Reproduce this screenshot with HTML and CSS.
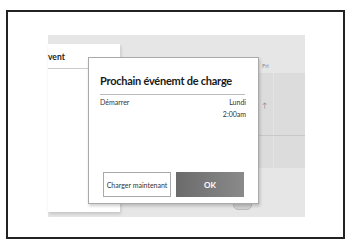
FILE: index.html
```html
<!DOCTYPE html>
<html lang="fr">
<head>
    <meta charset="UTF-8">
    <meta name="viewport" content="width=device-width, initial-scale=1.0">
    <title>Prochain événement de charge</title>
    <link rel="stylesheet" href="styles.css">
</head>
<body>
    <div class="frame">
        <div class="screen">
            <div class="schedule">
                <div class="day-label">Fri</div>
                <div class="grid">
                    <div class="grid-row">
                        <div class="cell"><span class="mark">↑</span></div>
                        <div class="cell"></div>
                    </div>
                    <div class="grid-row short">
                        <div class="cell"></div>
                        <div class="cell"></div>
                    </div>
                </div>
                <div class="toggle"></div>
            </div>

            <div class="side-panel">
                <div class="side-title">vent</div>
            </div>

            <div class="dialog">
                <h1 class="dialog-title">Prochain événemt de charge</h1>
                <div class="event-row">
                    <span class="event-label">Démarrer</span>
                    <span class="event-time">Lundi<br>2:00am</span>
                </div>
                <div class="dialog-buttons">
                    <button class="btn btn-outline">Charger maintenant</button>
                    <button class="btn btn-ok">OK</button>
                </div>
            </div>
        </div>
    </div>
</body>
</html>
```

FILE: styles.css
```css
body {
    margin: 0;
    padding: 0;
    background: #fff;
    font-family: Lato, "Open Sans", sans-serif;
}

.frame {
    margin: 10px 0 0 6px;
    width: 339px;
    height: 229px;
    border: 2px solid #222;
    padding: 23px 0 0 40px;
    box-sizing: border-box;
}

.screen {
    position: relative;
    width: 257px;
    height: 182px;
    background-color: #e6e6e6;
}

.schedule {
    display: flex;
    flex-direction: column;
    align-items: flex-end;
    padding-top: 27px;
}

.day-label {
    width: 46px;
    height: 11px;
    font-size: 6px;
    color: #888;
    padding-left: 3px;
    box-sizing: border-box;
}

.grid {
    width: 257px;
    display: flex;
    flex-direction: column;
}

.grid-row {
    display: flex;
    justify-content: flex-end;
    height: 62px;
    border-bottom: 1px solid #c8c8c8;
}

.grid-row.short {
    height: 32px;
    border-bottom: none;
}

.cell {
    width: 31px;
    background-color: #dcdcdc;
    border-left: 1px solid #e4e4e4;
    position: relative;
}

.cell:first-child {
    width: 226px;
}

.mark {
    position: absolute;
    left: 213px;
    top: 28px;
    font-size: 7px;
    color: #888;
}

.toggle {
    position: absolute;
    left: 185px;
    top: 165px;
    width: 17px;
    height: 8px;
    border-radius: 5px;
    background: #d0d0d0;
    border: 1px solid #bbb;
}

.side-panel {
    position: absolute;
    left: 0;
    top: 9px;
    width: 72px;
    height: 168px;
    background-color: #fff;
    box-shadow: 1px 2px 3px rgba(0, 0, 0, 0.15);
}

.side-title {
    height: 24px;
    border-bottom: 1px solid #ccc;
    font-size: 8.5px;
    font-weight: 700;
    color: #222;
    line-height: 26px;
}

.dialog {
    position: absolute;
    left: 40px;
    top: 22px;
    width: 171px;
    height: 147px;
    background-color: #fff;
    border: 1px solid #aaa;
    box-sizing: border-box;
    box-shadow: 1px 2px 3px rgba(0, 0, 0, 0.2);
    padding: 16px 11px 6px 11px;
    display: flex;
    flex-direction: column;
}

.dialog-title {
    margin: 0 2px 0 0;
    font-size: 11px;
    letter-spacing: -0.25px;
    line-height: 14px;
    font-weight: 700;
    color: #1a1a1a;
    white-space: nowrap;
    height: 20px;
    border-bottom: 1px solid #bbb;
}

.event-row {
    display: flex;
    justify-content: space-between;
    margin-top: 1px;
    font-size: 7px;
    line-height: 12px;
    color: #333;
}

.event-time {
    text-align: right;
    padding-right: 1px;
}

.dialog-buttons {
    margin-top: auto;
    display: flex;
    gap: 5px;
    padding-left: 3px;
}

.btn {
    width: 68px;
    height: 25px;
    font-family: Lato, "Open Sans", sans-serif;
    font-size: 7px;
    padding: 0;
    cursor: pointer;
}

.btn-outline {
    background: #fff;
    border: 1px solid #aaa;
    color: #333;
}

.btn-ok {
    border: none;
    background: linear-gradient(to right, #6b6b6b, #8a8a8a);
    color: #fff;
    font-weight: 700;
    font-size: 8px;
}
```
